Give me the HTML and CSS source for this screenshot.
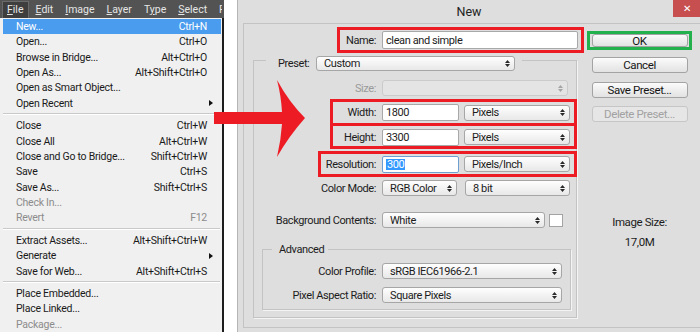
FILE: index.html
```html
<!DOCTYPE html>
<html>
<head>
  <meta charset="utf-8">
  <title>New document</title>
  <link rel="stylesheet" href="styles.css">
</head>
<body>
  <div class="ps">
    <div class="menubar">
      <span class="top active"><u>F</u>ile</span>
      <span class="top"><u>E</u>dit</span>
      <span class="top"><u>I</u>mage</span>
      <span class="top"><u>L</u>ayer</span>
      <span class="top">T<u>y</u>pe</span>
      <span class="top"><u>S</u>elect</span>
      <span class="top">Fil<u>t</u>er</span>
    </div>
    <ul class="menu">
      <li class="item hover"><span>New...</span><span>Ctrl+N</span></li>
      <li class="item"><span>Open...</span><span>Ctrl+O</span></li>
      <li class="item"><span>Browse in Bridge...</span><span>Alt+Ctrl+O</span></li>
      <li class="item"><span>Open As...</span><span>Alt+Shift+Ctrl+O</span></li>
      <li class="item"><span>Open as Smart Object...</span></li>
      <li class="item"><span>Open Recent</span><span class="sub"></span></li>
      <li class="sep"></li>
      <li class="item"><span>Close</span><span>Ctrl+W</span></li>
      <li class="item"><span>Close All</span><span>Alt+Ctrl+W</span></li>
      <li class="item"><span>Close and Go to Bridge...</span><span>Shift+Ctrl+W</span></li>
      <li class="item"><span>Save</span><span>Ctrl+S</span></li>
      <li class="item"><span>Save As...</span><span>Shift+Ctrl+S</span></li>
      <li class="item off"><span>Check In...</span></li>
      <li class="item off"><span>Revert</span><span>F12</span></li>
      <li class="sep"></li>
      <li class="item"><span>Extract Assets...</span><span>Alt+Shift+Ctrl+W</span></li>
      <li class="item"><span>Generate</span><span class="sub"></span></li>
      <li class="item"><span>Save for Web...</span><span>Alt+Shift+Ctrl+S</span></li>
      <li class="sep"></li>
      <li class="item"><span>Place Embedded...</span></li>
      <li class="item"><span>Place Linked...</span></li>
      <li class="item off"><span>Package...</span></li>
    </ul>
  </div>

  <div class="dialog">
    <div class="titlebar">New<span class="close">&#x2715;</span></div>
    <div class="dlg-body">
      <div class="panel">
        <div class="main">
          <div class="mark name-row">
            <span class="lbl">Name:</span>
            <div class="field name-field">clean and simple</div>
          </div>

          <fieldset class="group preset">
            <legend><div class="legend-in"><span class="preset-lbl">Preset:</span><div class="select preset-sel"><span>Custom</span><svg class="ud" width="5" height="7" viewBox="0 0 5 7"><path d="M2.5 0L5 3H0zM0 4h5L2.5 7z"/></svg></div></div></legend>

            <div class="row size-row">
              <span class="lbl off">Size:</span>
              <div class="select disabled size-sel"><span></span><svg class="ud" width="5" height="7" viewBox="0 0 5 7"><path d="M2.5 0L5 3H0zM0 4h5L2.5 7z"/></svg></div>
            </div>

            <div class="mark dim-row width-row">
              <span class="lbl">Width:</span>
              <div class="field num">1800</div>
              <div class="select unit"><span>Pixels</span><svg class="ud" width="5" height="7" viewBox="0 0 5 7"><path d="M2.5 0L5 3H0zM0 4h5L2.5 7z"/></svg></div>
            </div>

            <div class="mark dim-row height-row">
              <span class="lbl">Height:</span>
              <div class="field num">3300</div>
              <div class="select unit"><span>Pixels</span><svg class="ud" width="5" height="7" viewBox="0 0 5 7"><path d="M2.5 0L5 3H0zM0 4h5L2.5 7z"/></svg></div>
            </div>

            <div class="mark dim-row res-row">
              <span class="lbl">Resolution:</span>
              <div class="field num focus"><span class="picked">300</span></div>
              <div class="select unit"><span>Pixels/Inch</span><svg class="ud" width="5" height="7" viewBox="0 0 5 7"><path d="M2.5 0L5 3H0zM0 4h5L2.5 7z"/></svg></div>
            </div>

            <div class="row mode-row">
              <span class="lbl">Color Mode:</span>
              <div class="select mode-sel"><span>RGB Color</span><svg class="ud" width="5" height="7" viewBox="0 0 5 7"><path d="M2.5 0L5 3H0zM0 4h5L2.5 7z"/></svg></div>
              <div class="select bits-sel"><span>8 bit</span><svg class="ud" width="5" height="7" viewBox="0 0 5 7"><path d="M2.5 0L5 3H0zM0 4h5L2.5 7z"/></svg></div>
            </div>

            <div class="row bg-row">
              <span class="lbl">Background Contents:</span>
              <div class="select bg-sel"><span>White</span><svg class="ud" width="5" height="7" viewBox="0 0 5 7"><path d="M2.5 0L5 3H0zM0 4h5L2.5 7z"/></svg></div>
              <div class="swatch"></div>
            </div>

            <fieldset class="group advanced">
              <legend>Advanced</legend>
              <div class="row adv-row">
                <span class="lbl">Color Profile:</span>
                <div class="select adv-sel"><span>sRGB IEC61966-2.1</span><svg class="ud" width="5" height="7" viewBox="0 0 5 7"><path d="M2.5 0L5 3H0zM0 4h5L2.5 7z"/></svg></div>
              </div>
              <div class="row adv-row par">
                <span class="lbl">Pixel Aspect Ratio:</span>
                <div class="select adv-sel"><span>Square Pixels</span><svg class="ud" width="5" height="7" viewBox="0 0 5 7"><path d="M2.5 0L5 3H0zM0 4h5L2.5 7z"/></svg></div>
              </div>
            </fieldset>
          </fieldset>
        </div>

        <div class="side">
          <div class="ok-mark"><div class="btn ok">OK</div></div>
          <div class="btn cancel">Cancel</div>
          <div class="btn save">Save Preset...</div>
          <div class="btn delete disabled">Delete Preset...</div>
          <div class="size-title">Image Size:</div>
          <div class="size-value">17,0M</div>
        </div>
      </div>
    </div>
  </div>

  <svg class="arrow" width="700" height="332" viewBox="0 0 700 332">
    <path d="M214 112H282Q281 95 277 80Q289 102 305 118Q289 136 277 157Q281 140 282 124H214Z"/>
  </svg>
</body>
</html>
```

FILE: styles.css
```css
* {
  box-sizing: border-box;
}

html, body {
  margin: 0;
  padding: 0;
}

body {
  width: 700px;
  height: 332px;
  overflow: hidden;
  display: flex;
  position: relative;
  background: #fff;
  font-family: Roboto, "Liberation Sans", Arial, sans-serif;
}

/* photoshop file menu */
.ps {
  width: 224px;
  height: 332px;
  background: #535353;
  display: flex;
  flex-direction: column;
}

.menubar {
  width: 222px;
  height: 20px;
  overflow: hidden;
  display: flex;
  align-items: flex-end;
  padding-left: 2px;
  color: #e6e6e6;
  font-size: 10.5px;
  white-space: nowrap;
}

.top {
  height: 17px;
  line-height: 15px;
  padding: 0 4px;
  margin-right: 2px;
  border: 1px solid transparent;
  border-bottom: none;
}

.top.active {
  background: #3e3e3e;
  border-color: #6a6a6a;
}

.menu {
  flex: 1;
  margin: 0;
  padding: 1px 0 0;
  list-style: none;
  background: #f0f0f0;
  border-right: 2px solid #1d1d1d;
  font-size: 10.5px;
  letter-spacing: -0.25px;
  color: #1a1a1a;
}

.item {
  height: 15.4px;
  margin: 0 1px 0 3px;
  padding: 0 14px 0 13px;
  display: flex;
  align-items: center;
  justify-content: space-between;
  white-space: nowrap;
}

.item.hover {
  background: #4a9cee;
  color: #fff;
}

.item.off {
  color: #8c8c8c;
}

.sub {
  width: 0;
  height: 0;
  margin-right: -6px;
  border-left: 4px solid #111;
  border-top: 3.5px solid transparent;
  border-bottom: 3.5px solid transparent;
}

.sep {
  height: 7px;
  padding-top: 2px;
  margin: 0 2px 0 3px;
}

.sep::before {
  content: '';
  display: block;
  border-top: 1px solid #c9c9c9;
  border-bottom: 1px solid #fff;
}

/* new document dialog */
.dialog {
  width: 463px;
  height: 332px;
  margin-left: 13px;
  background: #dedede;
  border-left: 1px solid #b5b5b5;
  display: flex;
  flex-direction: column;
  position: relative;
  font-size: 11px;
  letter-spacing: -0.4px;
  color: #1c1c1c;
}

.titlebar {
  height: 23px;
  line-height: 23px;
  text-align: center;
  font-size: 12.5px;
  letter-spacing: 0;
  color: #222;
}

.close {
  position: absolute;
  top: 0;
  right: 0;
  width: 27px;
  height: 17px;
  line-height: 17px;
  background: #c74f4f;
  color: #fff;
  font-size: 10px;
  text-align: center;
}

.dlg-body {
  flex: 1;
  display: flex;
  padding: 0 0 4px 5px;
}

.panel {
  flex: 1;
  display: flex;
  border: 1px solid #c3c3c3;
  border-right: none;
}

.main {
  width: 340px;
}

.side {
  width: 105px;
  margin-left: 3px;
  display: flex;
  flex-direction: column;
  align-items: center;
}

.lbl {
  margin-right: 6px;
  text-align: right;
  white-space: nowrap;
}

.lbl.off {
  color: #9a9a9a;
}

.mark {
  display: flex;
  align-items: center;
  width: max-content;
  border: 3px solid #ed1c24;
}

.field {
  height: 17px;
  background: #fff;
  border: 1px solid #a8a8a8;
  border-radius: 2px;
  padding: 0 3px;
  display: flex;
  align-items: center;
  white-space: nowrap;
}

.field.focus {
  border-color: #6f9fd2;
}

.picked {
  background: #3399ff;
  color: #fff;
  padding: 0 1px;
  line-height: 11px;
}

.select {
  height: 15px;
  padding: 0 4px 0 7px;
  border: 1px solid #a6a6a6;
  border-radius: 3px;
  background: linear-gradient(#fefefe, #e8e8e8);
  display: flex;
  align-items: center;
  justify-content: space-between;
  white-space: nowrap;
  color: #1c1c1c;
}

.select .ud {
  fill: #2a2a2a;
}

.select.disabled {
  background: #e4e4e4;
  border-color: #cbcbcb;
}

.select.disabled .ud {
  fill: #a5a5a5;
}

.row {
  display: flex;
  align-items: center;
  height: 16px;
}

.row .select {
  height: 16px;
}

.name-row {
  height: 26px;
  margin: 3px 0 0 93px;
  padding-right: 3px;
}

.name-row .lbl {
  width: 36px;
}

.name-field {
  width: 196px;
  height: 18px;
}

.group {
  margin: 0;
  padding: 0;
  min-width: 0;
  border: 1px solid #c3c3c3;
  box-shadow: 1px 1px 0 #f4f4f4;
}

.preset {
  width: 324px;
  margin: -3px 0 0 9px;
  padding-bottom: 7px;
}

.preset > legend {
  margin-left: 12px;
  padding: 6px 7px 0 12px;
}

.legend-in {
  display: flex;
  align-items: center;
}

.preset-lbl {
  width: 38px;
}

.preset-sel {
  width: 199px;
}

.size-row {
  margin-top: 9px;
}

.size-row .lbl {
  width: 122px;
}

.size-sel {
  width: 186px;
}

.dim-row {
  padding-right: 4px;
}

.num {
  width: 77px;
  margin-right: 5px;
}

.unit {
  width: 106px;
  height: 16px;
}

.width-row {
  height: 27px;
  margin: 3px 0 0 76px;
}

.height-row {
  height: 26px;
  margin: -3px 0 0 76px;
  padding-top: 2px;
}

.width-row .lbl,
.height-row .lbl {
  width: 43px;
}

.res-row {
  height: 26px;
  margin: 2px 0 0 64px;
}

.res-row .lbl {
  width: 55px;
}

.mode-row {
  margin-top: 3px;
}

.mode-row .lbl,
.bg-row .lbl {
  width: 122px;
}

.mode-sel {
  width: 75px;
  margin-right: 8px;
}

.bits-sel {
  width: 105px;
}

.bg-row {
  margin-top: 16px;
}

.bg-sel {
  width: 163px;
  margin-right: 4px;
}

.swatch {
  width: 14px;
  height: 13px;
  background: #fff;
  border: 1px solid #a3a3a3;
}

.advanced {
  width: 309px;
  margin: 15px 0 0 8px;
  padding-bottom: 6px;
}

.advanced > legend {
  margin-left: 9px;
  padding: 0 4px 0 7px;
  line-height: 13px;
}

.adv-row {
  margin-top: 7px;
}

.adv-row.par {
  margin-top: 8px;
}

.adv-row .lbl {
  width: 113px;
}

.adv-sel {
  width: 180px;
}

.ok-mark {
  width: 105px;
  height: 19px;
  margin-top: 7px;
  padding: 0 1.5px;
  border: 3px solid #22b14c;
}

.btn {
  width: 96px;
  height: 16px;
  border: 1px solid #a3a3a3;
  border-radius: 3px;
  background: linear-gradient(#fbfbfb, #e2e2e2);
  display: flex;
  align-items: center;
  justify-content: center;
  font-size: 11.5px;
  color: #151515;
}

.btn.ok {
  height: 13px;
}

.cancel {
  margin-top: 7px;
}

.save {
  margin-top: 9px;
}

.delete {
  margin-top: 8px;
}

.btn.disabled {
  background: #e6e6e6;
  border-color: #c6c6c6;
  color: #a2a2a2;
}

.size-title {
  margin-top: 93px;
  line-height: 14px;
  font-size: 11.5px;
}

.size-value {
  margin-top: 6px;
  line-height: 14px;
  font-size: 11.5px;
}

/* red annotation arrow */
.arrow {
  position: absolute;
  left: 0;
  top: 0;
  pointer-events: none;
  fill: #ed1c24;
}
```
